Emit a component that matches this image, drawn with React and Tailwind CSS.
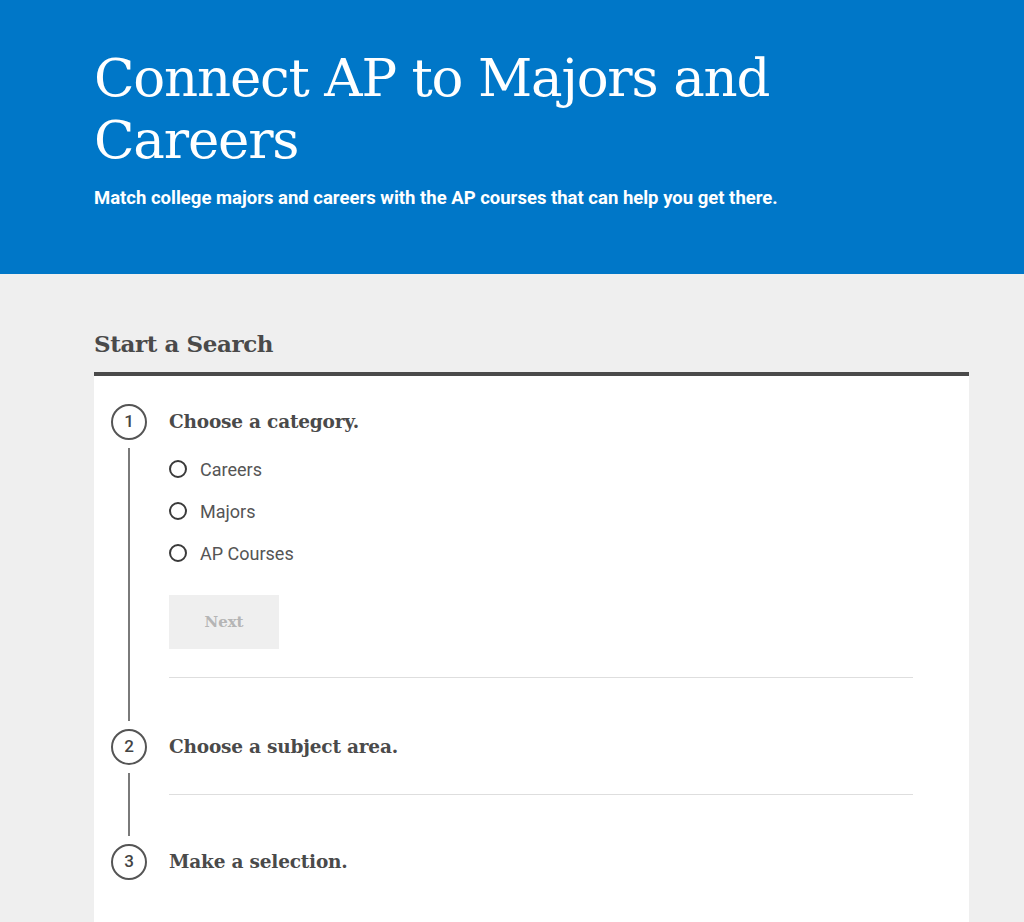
import React from "react";

const slab = { fontFamily: '"DejaVu Serif", "Liberation Serif", serif' };

function StepCircle({ n }) {
  return (
    <div className="w-[36px] h-[36px] rounded-full border-2 border-[#555] flex items-center justify-center text-[17px] font-medium text-[#444] bg-white shrink-0" style={{ fontFamily: 'Roboto, sans-serif' }}>
      {n}
    </div>
  );
}

function Radio({ label }) {
  return (
    <div className="flex items-center h-[42px]">
      <span className="w-[18px] h-[18px] rounded-full border-2 border-[#3a3a3a] box-border" />
      <span className="ml-[13px] text-[18px] text-[#555]">{label}</span>
    </div>
  );
}

function StepTitle({ children, className = "" }) {
  return (
    <div className={"h-[36px] flex items-center " + className}>
      <h3 className="text-[18.5px] font-bold text-[#4a4a4a] tracking-[-0.2px]" style={slab}>{children}</h3>
    </div>
  );
}

export default function App() {
  return (
    <div className="min-h-[922px] bg-[#efefef]" style={{ fontFamily: 'Roboto, "Liberation Sans", sans-serif' }}>
      <header className="bg-[#0077c8] h-[274px] pl-[94px] pt-[47px]">
        <h1 className="text-white text-[53px] leading-[62px] tracking-[-1.2px] w-[720px]" style={slab}>
          Connect AP to Majors and Careers
        </h1>
        <p className="text-white font-bold text-[18.5px] mt-[14px]">
          Match college majors and careers with the AP courses that can help you get there.
        </p>
      </header>
      <main className="pl-[94px] pr-[55px]">
        <h2 className="text-[#4a4a4a] text-[23px] tracking-[-0.4px] font-bold pt-[54px] pb-[12px] leading-[32px]" style={slab}>
          Start a Search
        </h2>
        <div className="border-t-4 border-[#4a4a4a] bg-white pb-[80px]">
          <div className="flex pl-[17px] pr-[56px] pt-[28px]">
            <div className="flex flex-col items-center w-[36px]">
              <StepCircle n="1" />
              <div className="w-[2px] bg-[#7a7a7a] h-[273px] my-[8px]" />
              <StepCircle n="2" />
              <div className="w-[2px] bg-[#7a7a7a] h-[63px] my-[8px]" />
              <StepCircle n="3" />
            </div>
            <div className="flex-1 ml-[22px]">
              <StepTitle>Choose a category.</StepTitle>
              <div className="mt-[8px]">
                <Radio label="Careers" />
                <Radio label="Majors" />
                <Radio label="AP Courses" />
              </div>
              <button className="mt-[21px] w-[110px] h-[54px] bg-[#efefef] text-[#b5b5b5] font-bold text-[15px]" style={slab}>
                Next
              </button>
              <div className="mt-[28px] border-t border-[#dedede]" />
              <StepTitle className="mt-[51px]">Choose a subject area.</StepTitle>
              <div className="mt-[29px] border-t border-[#dedede]" />
              <StepTitle className="mt-[49px]">Make a selection.</StepTitle>
            </div>
          </div>
        </div>
      </main>
    </div>
  );
}
